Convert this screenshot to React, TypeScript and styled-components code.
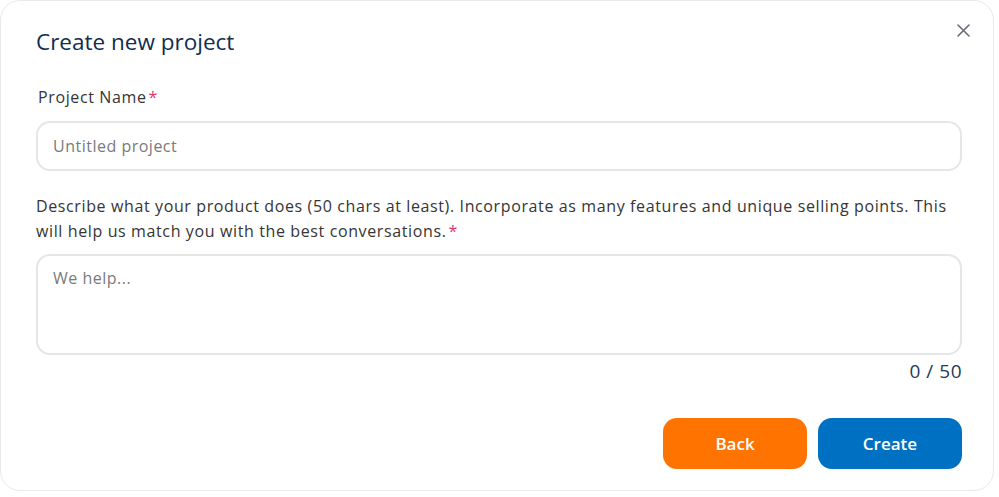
import React from "react";
import styled, { createGlobalStyle } from "styled-components";

const Global = createGlobalStyle`
  html, body { margin: 0; padding: 0; background: #ffffff; }
  body { font-family: "Open Sans", "Noto Sans", sans-serif; }
  * { box-sizing: border-box; }
`;

const Page = styled.div`
  position: relative;
  width: 999px;
  height: 497px;
  overflow: hidden;
  background: #ffffff;
`;

const Tick = styled.div<{ $top: number }>`
  position: absolute;
  left: 0;
  top: ${(p) => p.$top}px;
  width: 4px;
  height: 2px;
  background: #7a3a05;
`;

const Dialog = styled.div`
  position: relative;
  width: 994px;
  height: 491px;
  border-radius: 20px;
  border: 1px solid #e9e9e9;
  background: #ffffff;
  padding: 27px 31px 0 35px;
  display: flex;
  flex-direction: column;
`;

const Title = styled.h2`
  margin: 0;
  font-size: 22.5px;
  font-weight: 400;
  color: #0f2e50;
  line-height: 28px;
`;

const Close = styled.button`
  position: absolute;
  top: 18px;
  right: 19px;
  width: 22px;
  height: 22px;
  border: 0;
  padding: 0;
  background: transparent;
  display: flex;
  align-items: center;
  justify-content: center;
  cursor: pointer;
`;

const Label = styled.label<{ $indent?: number }>`
  display: block;
  font-size: 16px;
  line-height: 25px;
  letter-spacing: 0.62px;
  color: #353535;
  padding-left: ${(p) => p.$indent ?? 0}px;
  &::after {
    content: "*";
    color: #e8336b;
    margin-left: 2px;
    letter-spacing: 0;
  }
`;

const Field = styled.div<{ $mt: number }>`
  margin-top: ${(p) => p.$mt}px;
  display: flex;
  flex-direction: column;
`;

const Input = styled.input`
  margin-top: 11px;
  height: 50px;
  width: 100%;
  border: 2px solid #e6e6e6;
  border-radius: 14px;
  padding: 0 15px;
  font-family: inherit;
  font-size: 16px;
  letter-spacing: 0.5px;
  color: #333;
  outline: none;
  &::placeholder { color: #7a7a7a; }
`;

const TextArea = styled.textarea`
  margin-top: 10px;
  height: 101px;
  width: 100%;
  border: 2px solid #e6e6e6;
  border-radius: 14px;
  padding: 11px 15px;
  font-family: inherit;
  font-size: 16px;
  letter-spacing: 0.5px;
  color: #333;
  outline: none;
  resize: none;
  &::placeholder { color: #7a7a7a; }
`;

const Counter = styled.div`
  margin-top: 4px;
  text-align: right;
  font-size: 19px;
  letter-spacing: 0.5px;
  line-height: 24px;
  color: #1f3a5a;
`;

const Actions = styled.div`
  margin-top: 35px;
  display: flex;
  justify-content: flex-end;
  gap: 11px;
`;

const Button = styled.button<{ $bg: string }>`
  width: 144px;
  height: 51px;
  border: 0;
  border-radius: 14px;
  background: ${(p) => p.$bg};
  color: #ffffff;
  font-family: inherit;
  font-size: 17px;
  font-weight: 600;
  cursor: pointer;
`;

export default function App() {
  return (
    <Page>
      <Global />
      <Tick $top={183} />
      <Tick $top={345} />
      <Dialog>
        <Close aria-label="Close">
          <svg width="13" height="13" viewBox="0 0 13 13">
            <path d="M1 1 L12 12 M12 1 L1 12" stroke="#6b6b76" strokeWidth="1.6" strokeLinecap="round" />
          </svg>
        </Close>
        <Title>Create new project</Title>
        <Field $mt={29}>
          <Label $indent={2}>Project Name</Label>
          <Input placeholder="Untitled project" />
        </Field>
        <Field $mt={23}>
          <Label>
            Describe what your product does (50 chars at least). Incorporate as many features and unique selling points. This will help us match you with the best conversations.
          </Label>
          <TextArea placeholder="We help..." />
        </Field>
        <Counter>0 / 50</Counter>
        <Actions>
          <Button $bg="#ff7300">Back</Button>
          <Button $bg="#0070c2">Create</Button>
        </Actions>
      </Dialog>
    </Page>
  );
}
